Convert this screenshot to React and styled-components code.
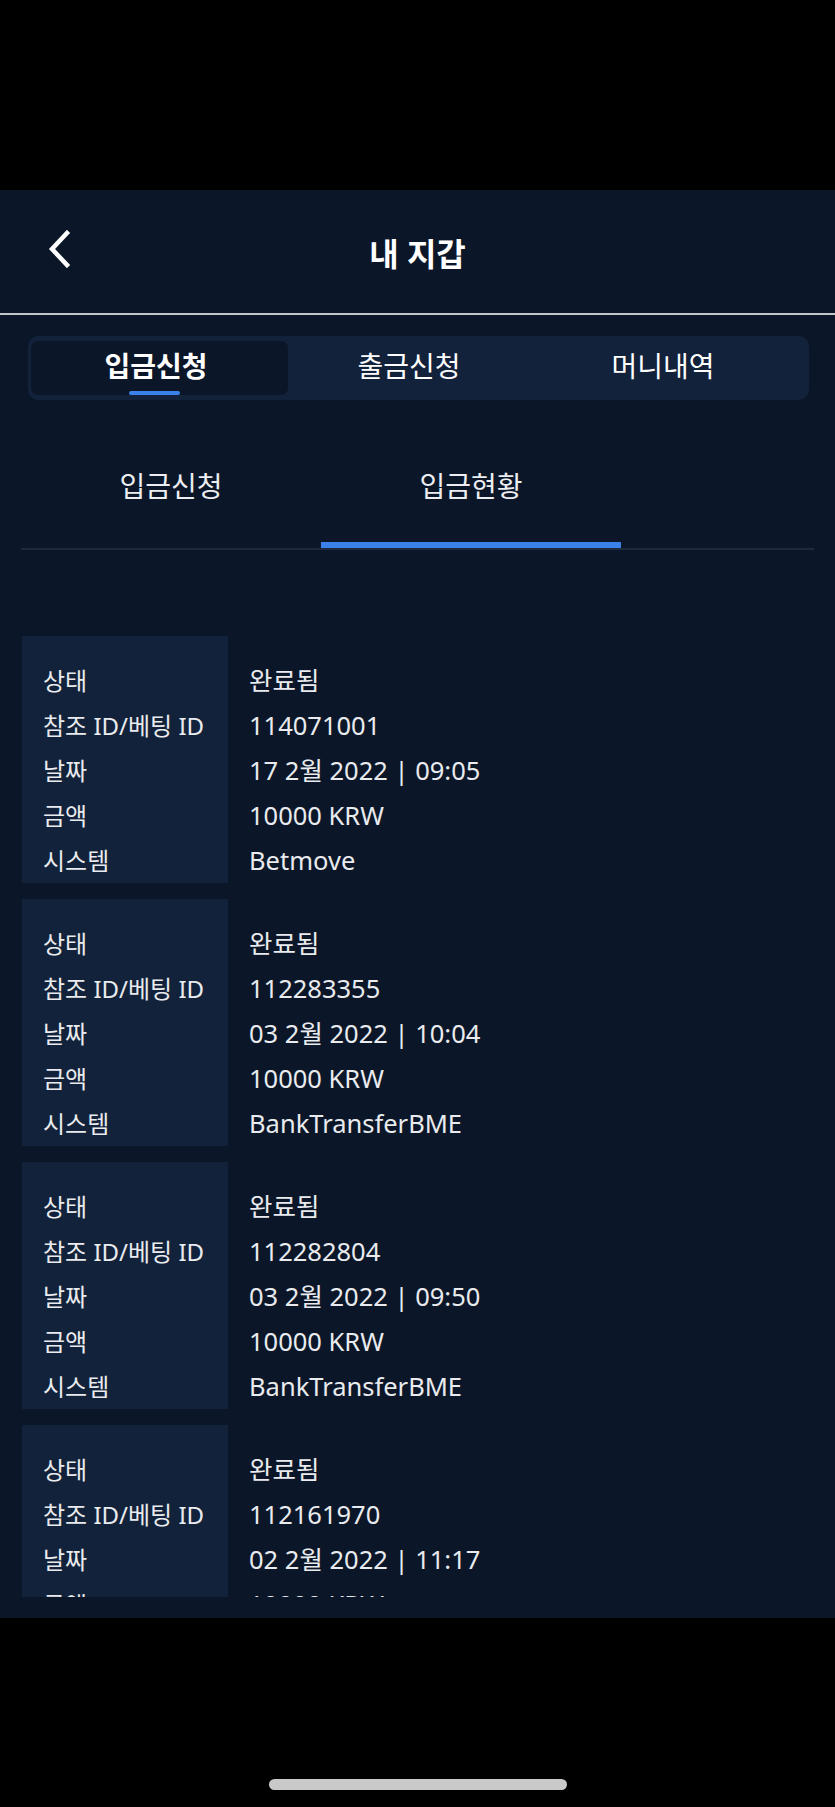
import { useState } from "react";
import styled, { createGlobalStyle } from "styled-components";

const GlobalStyle = createGlobalStyle`
    html, body {
        margin: 0;
        padding: 0;
        background: #000;
    }
    * {
        box-sizing: border-box;
    }
`;

const Phone = styled.div`
    width: 835px;
    height: 1807px;
    background: #000;
    display: flex;
    flex-direction: column;
    font-family: "Noto Sans", "Noto Sans CJK KR", sans-serif;
    color: #fff;
`;
const StatusBar = styled.div`
    height: 190px;
    flex-shrink: 0;
`;
const Screen = styled.div`
    height: 1428px;
    background: #0b1729;
    display: flex;
    flex-direction: column;
    padding-bottom: 21px;
    overflow: hidden;
`;
const Header = styled.header`
    height: 125px;
    display: grid;
    grid-template-columns: 100px 1fr 100px;
    align-items: center;
    border-bottom: 2px solid #c3c5c9;
    flex-shrink: 0;
`;
const BackButton = styled.button`
    background: none;
    border: none;
    padding: 0 0 0 46px;
    display: flex;
    align-items: center;
    cursor: pointer;
    height: 50px;
    margin-top: -6px;
`;
const Title = styled.h1`
    margin: 0;
    text-align: center;
    font-size: 32px;
    font-weight: 700;
    color: #fff;
`;
const Segmented = styled.div`
    margin: 21px 26px 0 28px;
    height: 64px;
    padding: 5px 3px;
    background: #13223b;
    border-radius: 10px;
    display: grid;
    grid-template-columns: 257px 249px 259px;
    flex-shrink: 0;
`;
const Segment = styled.button`
    position: relative;
    border: none;
    border-radius: 7px;
    background: ${(p) => (p.$active ? "#0b1628" : "transparent")};
    color: #fff;
    font-family: inherit;
    font-size: 28px;
    font-weight: ${(p) => (p.$active ? 700 : 400)};
    padding: 0 7px 4px 0;
    cursor: pointer;
    display: flex;
    align-items: center;
    justify-content: center;
    line-height: 1;

    &::after {
        content: "";
        display: ${(p) => (p.$active ? "block" : "none")};
        position: absolute;
        bottom: 0;
        left: 98px;
        width: 51px;
        height: 4px;
        border-radius: 2px;
        background: #3a82ea;
    }
`;
const SubTabs = styled.div`
    margin: 24px 21px 0;
    display: flex;
    border-bottom: 2px solid #1d2a3d;
    flex-shrink: 0;
`;
const SubTab = styled.button`
    width: 300px;
    height: 124px;
    border: none;
    background: transparent;
    color: #eceef1;
    font-family: inherit;
    font-size: 28px;
    font-weight: 400;
    cursor: pointer;
    padding: 0 0 2px;
    box-shadow: ${(p) => (p.$active ? "inset 0 -6px 0 #3a82ea" : "none")};
`;
const List = styled.div`
    flex: 1;
    overflow: hidden;
    padding: 86px 21px 0 22px;
    display: flex;
    flex-direction: column;
    gap: 16px;
`;
const Card = styled.div`
    display: flex;
    flex-shrink: 0;
`;
const Column = styled.div`
    flex: ${(p) => (p.$label ? "0 0 206px" : "1")};
    background: ${(p) => (p.$label ? "#12223a" : "transparent")};
    padding: 22px 0 0 21px;
    font-size: ${(p) => (p.$label ? "24px" : "25.5px")};
`;
const Line = styled.div`
    height: 45px;
    line-height: 45px;
    color: #e9ebee;
    white-space: nowrap;
`;
const HomeArea = styled.div`
    flex: 1;
    display: flex;
    justify-content: center;
    padding-top: 161px;
`;
const HomeIndicator = styled.div`
    width: 298px;
    height: 11px;
    border-radius: 6px;
    background: #c9c9c9;
`;

const labels = ["상태", "참조 ID/베팅 ID", "날짜", "금액", "시스템"];

const deposits = [
    { status: "완료됨", id: "114071001", date: "17 2월 2022 | 09:05", amount: "10000 KRW", system: "Betmove" },
    { status: "완료됨", id: "112283355", date: "03 2월 2022 | 10:04", amount: "10000 KRW", system: "BankTransferBME" },
    { status: "완료됨", id: "112282804", date: "03 2월 2022 | 09:50", amount: "10000 KRW", system: "BankTransferBME" },
    { status: "완료됨", id: "112161970", date: "02 2월 2022 | 11:17", amount: "10000 KRW", system: "BankTransferBME" },
];

const BackIcon = () => (
    <svg width="26" height="38" viewBox="0 0 26 38">
        <polyline points="21,3 6,19 21,35" fill="none" stroke="#fff" strokeWidth="4.5" strokeLinecap="square" />
    </svg>
);

const App = () => {
    const [tab, setTab] = useState(0);
    const [subTab, setSubTab] = useState(1);

    return (
        <Phone>
            <GlobalStyle />
            <StatusBar />
            <Screen>
                <Header>
                    <BackButton aria-label="back"><BackIcon /></BackButton>
                    <Title>내 지갑</Title>
                    <div />
                </Header>
                <Segmented>
                    {["입금신청", "출금신청", "머니내역"].map((t, i) => (
                        <Segment key={t} $active={tab === i} onClick={() => setTab(i)}>{t}</Segment>
                    ))}
                </Segmented>
                <SubTabs>
                    {["입금신청", "입금현황"].map((t, i) => (
                        <SubTab key={t} $active={subTab === i} onClick={() => setSubTab(i)}>{t}</SubTab>
                    ))}
                </SubTabs>
                <List>
                    {deposits.map((d) => (
                        <Card key={d.id}>
                            <Column $label>
                                {labels.map((l) => <Line key={l}>{l}</Line>)}
                            </Column>
                            <Column>
                                <Line>{d.status}</Line>
                                <Line>{d.id}</Line>
                                <Line>{d.date}</Line>
                                <Line>{d.amount}</Line>
                                <Line>{d.system}</Line>
                            </Column>
                        </Card>
                    ))}
                </List>
            </Screen>
            <HomeArea>
                <HomeIndicator />
            </HomeArea>
        </Phone>
    );
};

export default App;
